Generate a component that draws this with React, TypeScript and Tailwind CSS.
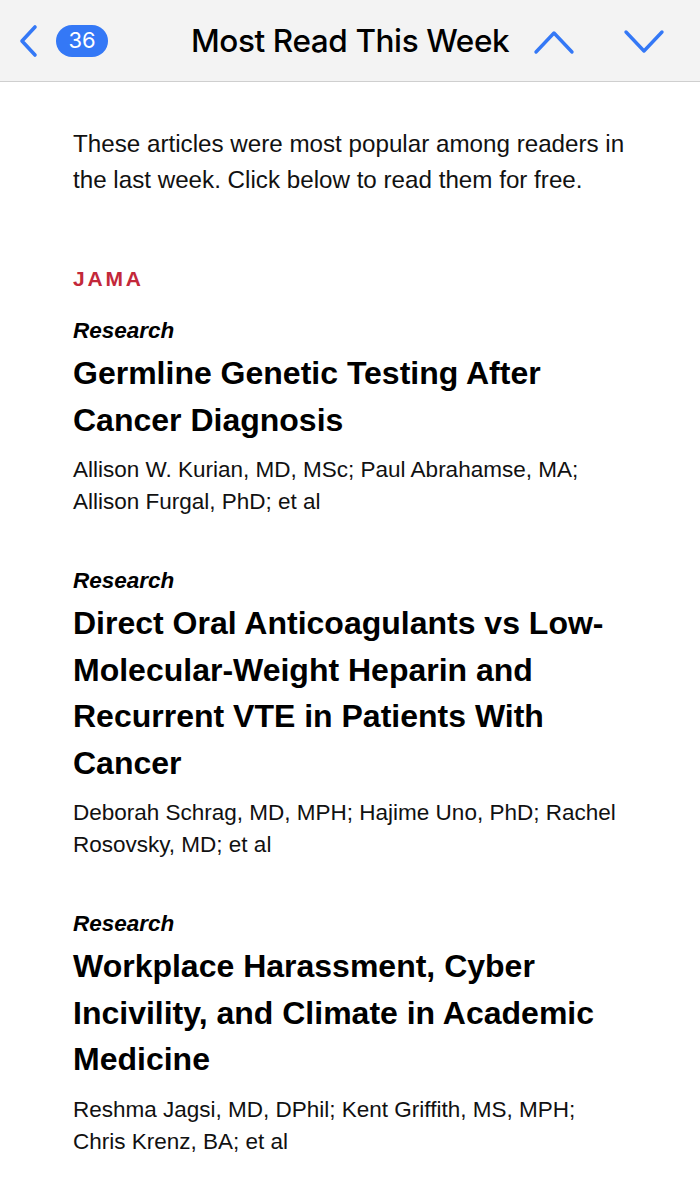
import { JSX } from "react";

type Article = {
    title: string[],
    authors: string[]
}

const articles: Article[] = [
    {
        title: ["Germline Genetic Testing After", "Cancer Diagnosis"],
        authors: ["Allison W. Kurian, MD, MSc; Paul Abrahamse, MA;", "Allison Furgal, PhD; et al"],
    },
    {
        title: ["Direct Oral Anticoagulants vs Low-", "Molecular-Weight Heparin and", "Recurrent VTE in Patients With", "Cancer"],
        authors: ["Deborah Schrag, MD, MPH; Hajime Uno, PhD; Rachel", "Rosovsky, MD; et al"],
    },
    {
        title: ["Workplace Harassment, Cyber", "Incivility, and Climate in Academic", "Medicine"],
        authors: ["Reshma Jagsi, MD, DPhil; Kent Griffith, MS, MPH;", "Chris Krenz, BA; et al"],
    },
]

const Header = (): JSX.Element => {
    return (
        <header className="h-[82px] bg-[#f3f3f3] border-b border-[#cfcfcf] flex items-center relative">
            <svg width="22" height="34" viewBox="0 0 22 34" className="ml-[17px]">
                <path d="M18 3 L5 17 L18 31" fill="none" stroke="#3478f6" strokeWidth="3.6" strokeLinecap="round" strokeLinejoin="round" />
            </svg>
            <div className="ml-[17px] w-[52px] h-[32px] rounded-full bg-[#3478f6] text-white flex items-center justify-center text-[22px] font-[Inter,sans-serif]">36</div>
            <h1 className="ml-[83px] text-[31.5px] font-medium text-black tracking-[-0.4px] font-[Inter,sans-serif]">Most Read This Week</h1>
            <svg width="42" height="26" viewBox="0 0 42 26" className="absolute left-[533px] top-[29px]">
                <path d="M3 23 L21 4 L39 23" fill="none" stroke="#3478f6" strokeWidth="3.4" strokeLinecap="round" strokeLinejoin="round" />
            </svg>
            <svg width="42" height="26" viewBox="0 0 42 26" className="absolute left-[623px] top-[29px]">
                <path d="M3 3 L21 22 L39 3" fill="none" stroke="#3478f6" strokeWidth="3.4" strokeLinecap="round" strokeLinejoin="round" />
            </svg>
        </header>
    )
}

const ArticleItem = ({ article, first }: { article: Article, first: boolean }): JSX.Element => {
    return (
        <div className={first ? "mt-[24px]" : "mt-[49px]"}>
            <p className="text-[22.5px] leading-[28px] font-bold italic text-black">Research</p>
            <h2 className="mt-[5px] text-[32px] leading-[46.5px] font-bold text-black">
                {article.title.map((l) => <span key={l} className="block">{l}</span>)}
            </h2>
            <p className="mt-[11px] text-[22.5px] leading-[32px] text-[#111]">
                {article.authors.map((l) => <span key={l} className="block">{l}</span>)}
            </p>
        </div>
    )
}

const App = (): JSX.Element => {
    return (
        <div className="w-[700px] min-h-[1200px] bg-white font-['Liberation_Sans',Arial,sans-serif]">
            <Header />
            <main className="pl-[73px] pr-4 pt-[44px]">
                <p className="text-[24.2px] leading-[36px] text-[#111]">
                    <span className="block">These articles were most popular among readers in</span>
                    <span className="block">the last week. Click below to read them for free.</span>
                </p>
                <p className="mt-[67px] text-[21px] leading-[28px] font-bold tracking-[2.8px] text-[#c3283a]">JAMA</p>
                {articles.map((a, i) => <ArticleItem key={i} article={a} first={i === 0} />)}
            </main>
        </div>
    )
}

export default App;
